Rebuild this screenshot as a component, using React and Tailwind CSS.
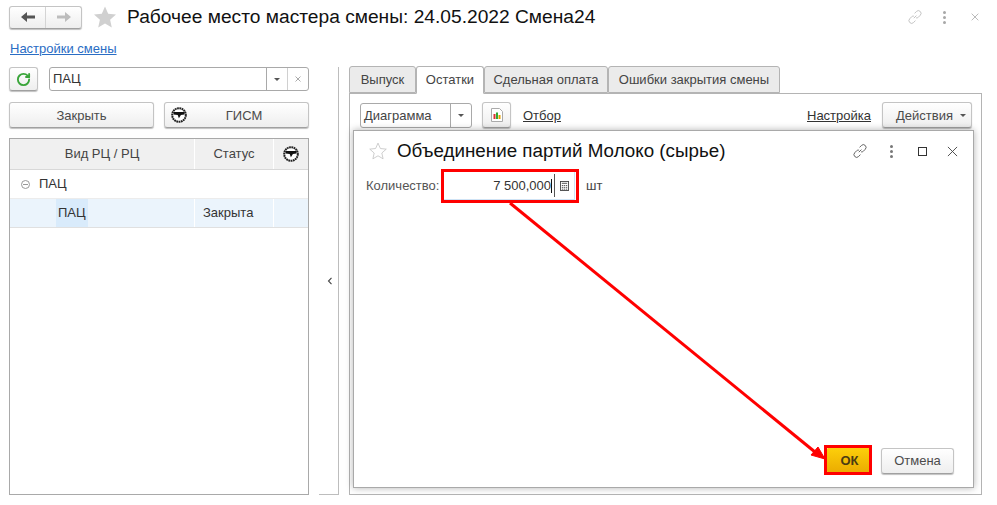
import { RotateCw } from 'lucide-react';

const btn = 'flex items-center justify-center rounded-[3px] border border-[#c4c4c4] border-b-[#a0a0a0] bg-gradient-to-b from-white to-[#eeeeee] shadow-[0_1px_1px_rgba(0,0,0,0.25)] text-[#4b4b4b]';

function Star({ className, fill = '#d0d0d0', stroke = 'none' }) {
  return (
    <svg viewBox="0 0 24 24" className={className}>
      <path d="M12 1.5l3.2 7.2 7.8.8-5.9 5.2 1.7 7.7L12 18.4l-6.8 4 1.7-7.7L1 9.5l7.8-.8z" fill={fill} stroke={stroke} />
    </svg>
  );
}

function GismIcon({ className }) {
  return (
    <svg viewBox="0 0 16 16" className={className}>
      <circle cx="8" cy="8" r="6.8" fill="#fff" stroke="#222" strokeWidth="2" strokeDasharray="1.8 0.5" />
      <path d="M2.5 5h11v2.6l-3.6 .5-2 3.2-1.2-3.2-4.2-.5z" fill="#111" />
    </svg>
  );
}

function LinkIcon({ className }) {
  return (
    <svg viewBox="0 0 16 16" className={className} fill="none" stroke="currentColor" strokeWidth="1">
      <path d="M6.8 9.2l2.6-2.6M7.6 4.4l1.8-1.9a2.6 2.6 0 0 1 3.9 3.7l-2 2.1a2.6 2.6 0 0 1-2.2.6M8.4 11.6l-1.8 1.9a2.6 2.6 0 0 1-3.9-3.7l2-2.1a2.6 2.6 0 0 1 2.2-.6" />
    </svg>
  );
}

function Dots({ color }) {
  return (
    <div className="flex flex-col gap-[2px]">
      <span className={`w-[3px] h-[3px] rounded-full ${color}`} />
      <span className={`w-[3px] h-[3px] rounded-full ${color}`} />
      <span className={`w-[3px] h-[3px] rounded-full ${color}`} />
    </div>
  );
}

function Caret() {
  return <span className="w-0 h-0 border-x-[3px] border-x-transparent border-t-[3px] border-t-[#555]" />;
}

function Cross({ className }) {
  return (
    <svg viewBox="0 0 12 12" className={className} fill="none" stroke="currentColor" strokeWidth="1">
      <path d="M1 1l10 10M11 1L1 11" />
    </svg>
  );
}

function LeftPanel() {
  return (
    <div className="w-[300px] flex flex-col">
      <div className="flex gap-[11px] h-[24px]">
        <button className={`${btn} w-[29px]`}>
          <RotateCw size={15} strokeWidth={3} className="text-[#3aa53a]" />
        </button>
        <div className="flex-1 flex items-stretch rounded-[3px] border border-[#a9a9a9] bg-white">
          <span className="flex-1 pl-[3px] leading-[22px]">ПАЦ</span>
          <span className="w-[21px] flex items-center justify-center border-l border-[#a9a9a9]"><Caret /></span>
          <span className="w-[21px] flex items-center justify-center border-l border-[#d0d0d0] text-[#555]"><Cross className="w-[6px] h-[6px]" /></span>
        </div>
      </div>
      <div className="flex gap-[10px] h-[26px] mt-[11px]">
        <button className={`${btn} flex-1 pt-px`}>Закрыть</button>
        <button className={`${btn} flex-1 pt-px relative`}>
          <GismIcon className="w-[16px] h-[16px] absolute left-[6px] top-[4px]" />
          <span className="pl-[15px]">ГИСМ</span>
        </button>
      </div>
      <div className="mt-[10px] flex-1 border border-[#a9a9a9] bg-white">
        <div className="flex h-[31px] bg-[#f0f0f0] border-b border-[#d8d8d8] text-[#444]">
          <div className="w-[185px] flex items-center justify-center border-r border-white">Вид РЦ / РЦ</div>
          <div className="w-[79px] flex items-center justify-center border-r border-white">Статус</div>
          <div className="flex-1 flex items-center justify-center"><GismIcon className="w-[16px] h-[16px]" /></div>
        </div>
        <div className="flex h-[29px] items-center border-b border-[#ececec] pl-[11px] text-[#333]">
          <span className="w-[9px] h-[9px] rounded-full border border-[#999] flex items-center justify-center">
            <span className="w-[5px] h-px bg-[#999]" />
          </span>
          <span className="ml-[9px]">ПАЦ</span>
        </div>
        <div className="flex h-[29px] bg-[#ebf4fc] border-b border-[#e0e0e0] text-[#333]">
          <div className="w-[185px] flex items-stretch border-r border-white pl-[46px]">
            <span className="bg-[#d9ebfb] px-[2px] leading-[28px]">ПАЦ</span>
          </div>
          <div className="w-[79px] pl-[8px] leading-[28px] border-r border-white">Закрыта</div>
        </div>
      </div>
    </div>
  );
}

function Splitter() {
  return (
    <div className="w-[40px] flex">
      <div className="ml-[10px] w-[20px] flex items-center justify-center border-r border-b border-[#bdbdbd]">
        <svg viewBox="0 0 6 8" className="w-[6px] h-[8px] mr-[-2px]" fill="none" stroke="#444" strokeWidth="1.1">
          <path d="M4.5 .8L1.5 4l3 3.2" />
        </svg>
      </div>
    </div>
  );
}

function Tab({ active, width, children }) {
  return (
    <div
      className={
        active
          ? `${width} h-[28px] -mb-px z-10 flex items-center justify-center rounded-t-[3px] border border-[#b4b4b4] border-b-white bg-white text-[#444]`
          : `${width} h-[27px] flex items-center justify-center rounded-t-[3px] border border-[#b4b4b4] bg-[#ebebeb] text-[#444]`
      }
    >
      {children}
    </div>
  );
}

function Modal() {
  return (
    <div className="absolute left-[353px] top-[130px] w-[621px] h-[358px] bg-white border border-[#a9a9a9] shadow-[0_0_7px_rgba(0,0,0,0.3)] flex flex-col">
      <div className="flex items-center h-[40px] pl-[15px] pr-[15px]">
        <Star className="w-[18px] h-[18px]" fill="#fff" stroke="#bdbdbd" />
        <span className="ml-[10px] text-[18.8px] text-[#111]">Объединение партий Молоко (сырье)</span>
        <div className="ml-auto flex items-center text-[#666]">
          <LinkIcon className="w-[16px] h-[16px]" />
          <span className="ml-[22px]"><Dots color="bg-[#777]" /></span>
          <span className="ml-[25px] w-[9px] h-[9px] border border-[#333]" />
          <Cross className="ml-[20px] w-[11px] h-[11px] text-[#444]" />
        </div>
      </div>
      <div className="flex items-center pl-[12px] h-[29px]">
        <span className="text-[#555] w-[75px]">Количество:</span>
        <div className="w-[134px] h-[29px] flex items-center justify-end bg-white border border-[#cfe3f5] pr-[5px]">
          <span className="text-[#333]">7 500,000</span>
          <span className="w-px h-[14px] bg-[#111]" />
          <span className="w-px h-[23px] bg-[#555] ml-[2px]" />
          <svg viewBox="0 0 10 11" className="w-[9px] h-[10px] ml-[5px]" fill="none" stroke="#444" strokeWidth="1">
            <rect x=".5" y=".5" width="9" height="10" />
            <path d="M2 2.5h6M2 5h1.5M4.2 5h1.5M6.5 5h1.5M2 7h1.5M4.2 7h1.5M6.5 7h1.5M2 9h1.5M4.2 9h1.5M6.5 9h1.5" />
          </svg>
        </div>
        <span className="ml-[11px] text-[#444]">шт</span>
      </div>
      <div className="mt-auto mb-[13px] flex justify-end items-center gap-[9px] pr-[19px]">
        <button className="w-[45px] h-[27px] flex items-center justify-center font-bold rounded-[3px] bg-gradient-to-b from-[#fdd10b] to-[#eaa900] text-[#4a3b12]">ОК</button>
        <button className={`${btn} w-[73px] h-[26px] pt-px`}>Отмена</button>
      </div>
    </div>
  );
}

function RightPanel() {
  return (
    <div className="w-[633px] -mt-px flex flex-col">
      <div className="flex h-[27px] items-end">
        <Tab width="w-[67px]">Выпуск</Tab>
        <Tab active width="w-[68px]">Остатки</Tab>
        <Tab width="w-[124px]">Сдельная оплата</Tab>
        <Tab width="w-[172px]">Ошибки закрытия смены</Tab>
      </div>
      <div className="flex-1 border border-[#b4b4b4] bg-white">
        <div className="flex items-center h-[26px] mt-[8px] pl-[10px] pr-[9px]">
          <div className="w-[112px] h-[25px] flex rounded-[3px] border border-[#a9a9a9] bg-white text-[#444]">
            <span className="flex-1 pl-[3px] leading-[23px]">Диаграмма</span>
            <span className="w-[21px] flex items-center justify-center border-l border-[#a9a9a9]"><Caret /></span>
          </div>
          <button className={`${btn} w-[29px] h-[26px] ml-[10px]`}>
            <svg viewBox="0 0 12 14" className="w-[12px] h-[14px]">
              <path d="M.5 .5h8l3 3v10H.5z" fill="#fff" stroke="#aaa" />
              <rect x="2.5" y="6" width="2" height="5" fill="#d33" />
              <rect x="5" y="4.5" width="2" height="6.5" fill="#3a3" />
              <rect x="7.5" y="7" width="2" height="4" fill="#e8a000" />
            </svg>
          </button>
          <span className="ml-[12px] mt-[2px] underline text-[#333]">Отбор</span>
          <span className="ml-auto mt-[2px] underline text-[#333]">Настройка</span>
          <button className={`${btn} w-[90px] h-[26px] ml-[11px] gap-[7px] pl-[8px] pt-px`}>Действия <Caret /></button>
        </div>
      </div>
    </div>
  );
}

function Arrow() {
  return (
    <svg className="absolute left-0 top-0 w-[997px] h-[505px] pointer-events-none" viewBox="0 0 997 505">
      <rect x="442.5" y="170.5" width="135" height="31" fill="none" stroke="#ff0000" strokeWidth="3" />
      <rect x="825.5" y="446.5" width="45" height="27" fill="none" stroke="#ff0000" strokeWidth="3" />
      <path d="M510 203L815 452" stroke="#ff0000" strokeWidth="3" fill="none" />
      <path d="M825 459L811 455L818 447z" fill="#ff0000" stroke="#ff0000" />
    </svg>
  );
}

export default function App() {
  return (
    <div className="relative w-[997px] h-[505px] bg-white overflow-hidden text-[13px] text-[#333] font-['Liberation_Sans',Arial,sans-serif]">
      <div className="flex flex-col h-full pt-[5px] pl-[9px] pr-[15px] pb-[10px]">
        <div className="flex items-center h-[24px]">
          <div className={`${btn} w-[73px] h-[23px]`}>
            <span className="flex-1 flex items-center justify-center h-full border-r border-[#d4d4d4]">
              <svg viewBox="0 0 14 10" className="w-[14px] h-[10px]"><path d="M0 5l6-5v3.4h8v3.2H6V10z" fill="#555" /></svg>
            </span>
            <span className="flex-1 flex items-center justify-center">
              <svg viewBox="0 0 14 10" className="w-[14px] h-[10px]"><path d="M14 5L8 0v3.4H0v3.2h8V10z" fill="#bdbdbd" /></svg>
            </span>
          </div>
          <Star className="w-[24px] h-[24px] ml-[11px]" />
          <h1 className="ml-[10px] mt-px text-[19.2px] text-[#111]">Рабочее место мастера смены: 24.05.2022 Смена24</h1>
          <div className="ml-auto flex items-center pr-[3px] text-[#c4c4c4]">
            <LinkIcon className="w-[16px] h-[16px]" />
            <span className="ml-[20px]"><Dots color="bg-[#a8a8a8]" /></span>
            <Cross className="ml-[25px] w-[8px] h-[8px] text-[#999]" />
          </div>
        </div>
        <a className="ml-px mt-[12px] h-[16px] leading-[16px] underline text-[#2a6dc4]">Настройки смены</a>
        <div className="flex flex-1 mt-[10px]">
          <LeftPanel />
          <Splitter />
          <RightPanel />
        </div>
      </div>
      <Modal />
      <Arrow />
    </div>
  );
}
